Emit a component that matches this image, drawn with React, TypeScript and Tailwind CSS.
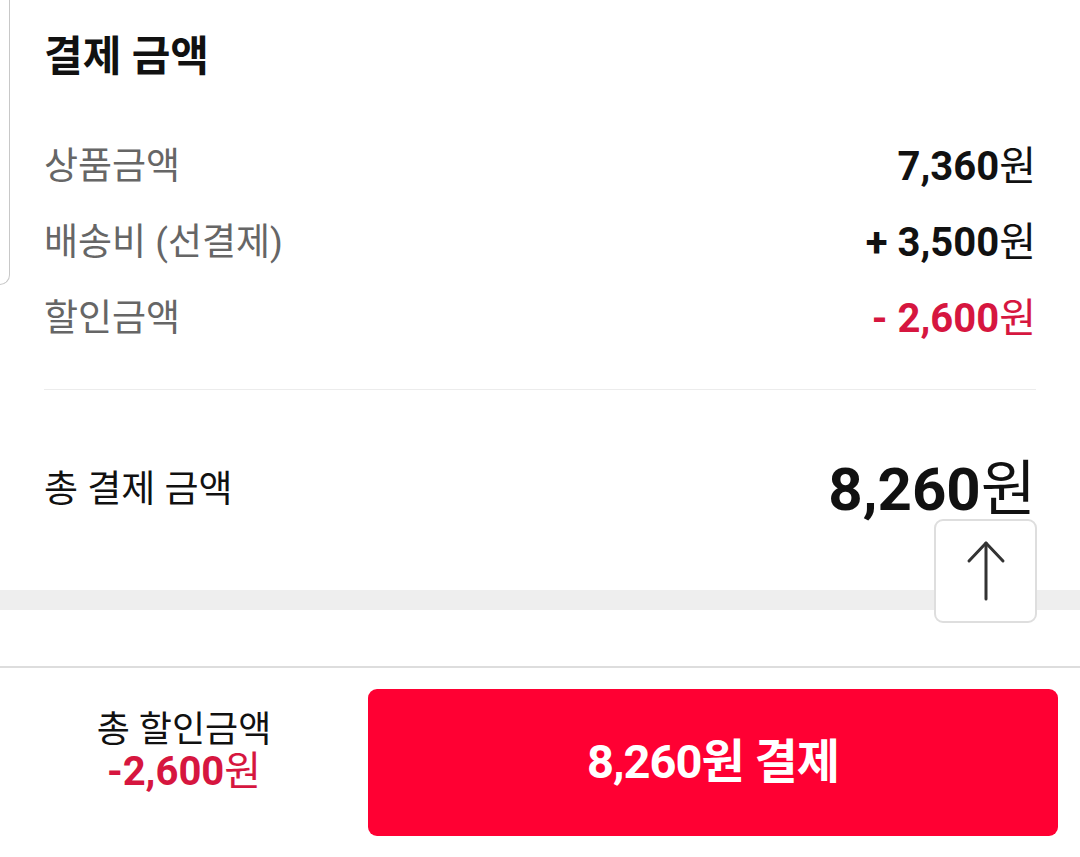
const font = "font-['Roboto','Noto_Sans_CJK_KR',sans-serif]";

interface RowProps {
  label: string;
  value: string;
  sign?: string;
  red?: boolean;
}

const PriceRow = ({ label, value, sign, red }: RowProps) => {
  return (
    <div className="flex h-[76px] items-center justify-between">
      <span className="text-[37px] text-[#666]">{label}</span>
      <span className={`text-[40px] font-bold ${red ? 'text-[#d6163f]' : 'text-[#111]'}`}>
        {sign && <span className="mr-[10px]">{sign}</span>}
        {value}
        <span className="font-normal">원</span>
      </span>
    </div>
  );
};

export default function App() {
  return (
    <div className={`relative flex h-[857px] w-[1080px] flex-col overflow-hidden bg-white ${font}`}>
      {/* 왼쪽 카드 가장자리 */}
      <div className="absolute left-0 top-0 h-[285px] w-[10px] rounded-br-[12px] border-b border-r border-[#c8c8c8]" />

      <section className="px-[44px]">
        <div className="flex h-[112px] items-center">
          <strong className="text-[42px] font-bold text-[#111]">결제 금액</strong>
        </div>
        <div className="mt-[17px]">
          <PriceRow label="상품금액" value="7,360" />
          <PriceRow label="배송비 (선결제)" value="3,500" sign="+" />
          <PriceRow label="할인금액" value="2,600" sign="-" red />
        </div>
        <div className="mt-[32px] border-t border-[#ececec]" />
        <div className="flex h-[200px] items-center justify-between">
          <span className="text-[37px] text-[#111]">총 결제 금액</span>
          <span className="text-[60px] font-bold text-[#111]">
            8,260<span className="font-normal">원</span>
          </span>
        </div>
      </section>

      <div className="h-[20px] bg-[#eeeeee]" />
      <div className="h-[56px]" />

      <div className="flex h-[191px] border-t-2 border-[#dddddd]">
        <div className="flex w-[368px] flex-col items-center justify-center gap-[2px] pb-[20px] leading-[1.05]">
          <span className="text-[36px] text-[#111]">총 할인금액</span>
          <span className="text-[40px] font-bold text-[#d6163f]">
            -2,600<span className="font-normal">원</span>
          </span>
        </div>
        <button
          type="button"
          className="my-[21px] flex w-[690px] items-center justify-center rounded-[9px] bg-[#ff0033] text-[47px] font-bold tracking-[-1px] text-white"
        >
          8,260원 결제
        </button>
      </div>

      {/* 맨 위로 */}
      <button
        type="button"
        className="absolute left-[934px] top-[519px] flex h-[104px] w-[103px] items-center justify-center rounded-[9px] border-2 border-[#dedede] bg-white/95"
      >
        <svg width="40" height="62" viewBox="0 0 40 62" fill="none" stroke="#333" strokeWidth="3" strokeLinecap="round" strokeLinejoin="round">
          <path d="M20 3v56" />
          <path d="M3 21 20 3l17 18" />
        </svg>
      </button>
    </div>
  );
}
